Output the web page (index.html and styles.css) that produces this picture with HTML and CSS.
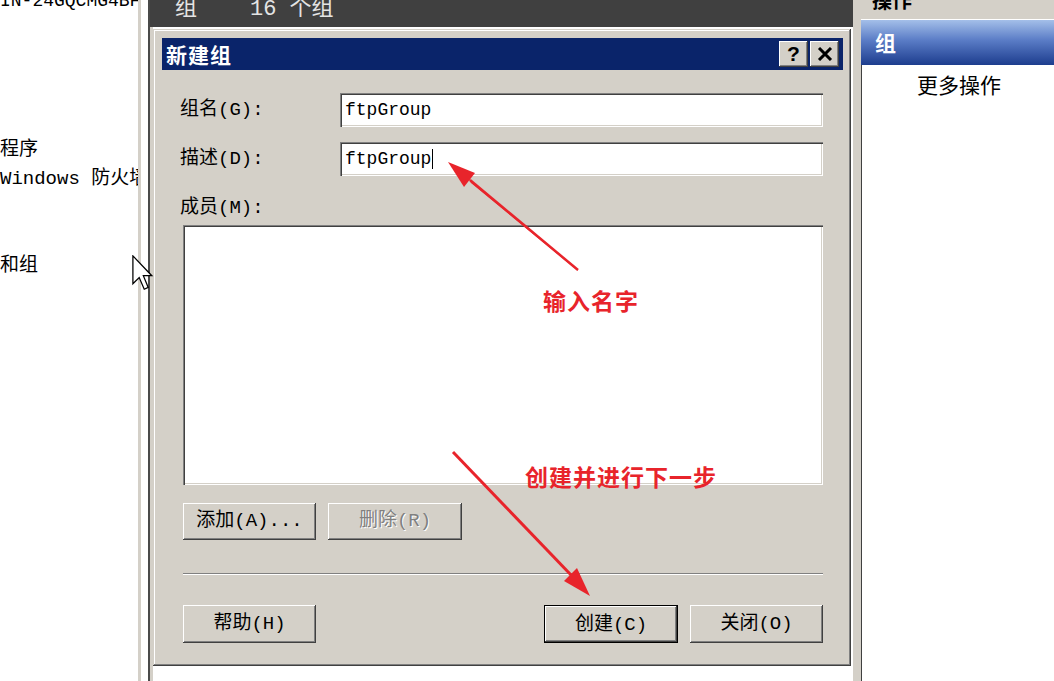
FILE: index.html
```html
<!DOCTYPE html>
<html lang="zh-CN">
<head>
  <meta charset="UTF-8" />
  <title>新建组</title>
  <link rel="stylesheet" href="styles.css">
</head>
<body>

<div class="screen">
  <div class="tree">
    <div class="tree-item top">IN-24GQCMG4BF</div>
    <div class="tree-item t1">程序</div>
    <div class="tree-item">Windows 防火墙</div>
    <div class="tree-item t3">和组</div>
  </div>
  <div class="split"></div>
  <div class="center">
    <div class="list-head"><span>组</span><span class="count">16 个组</span></div>
    <div class="list-body"></div>
  </div>
  <div class="actions">
    <div class="act-head">操作</div>
    <div class="act-band">组</div>
    <div class="act-item">更多操作</div>
  </div>
</div>

<div class="dialog">
  <div class="title">
    <span class="title-text">新建组</span>
    <div class="title-btns">
      <div class="tbtn q">?</div>
      <div class="tbtn">
        <svg width="16" height="14" viewBox="0 0 16 14"><path d="M2 1 L14 13 M14 1 L2 13" stroke="#000" stroke-width="3"/></svg>
      </div>
    </div>
  </div>

  <div class="body">
    <div class="fields">
      <label>组名(G):</label>
      <div class="field"><span>ftpGroup</span></div>
      <label>描述(D):</label>
      <div class="field"><span class="caret">ftpGroup</span></div>
    </div>

    <div class="members-label">成员(M):</div>
    <div class="members"></div>

    <div class="btn-row first">
      <div class="btn">添加(A)...</div>
      <div class="btn disabled">删除(R)</div>
    </div>

    <div class="sep"></div>

    <div class="btn-row last">
      <div class="btn">帮助(H)</div>
      <div class="spacer"></div>
      <div class="btn default">创建(C)</div>
      <div class="btn">关闭(O)</div>
    </div>
  </div>
</div>

<svg class="cursor" width="24" height="38" viewBox="0 0 24 38">
  <path d="M0.5 0.5 L0.5 16 L4 12.5 L6.8 19 L9 18 L6.3 11.5 L11 11.5 Z" transform="scale(1.8)" fill="#fff" stroke="#000" stroke-width="0.7" stroke-linejoin="miter"/>
</svg>

<svg class="marks" width="1054" height="681" viewBox="0 0 1054 681">
  <polygon points="578,271 577,269 468,178 471,183" fill="#e8242b"/>
  <line x1="578" y1="270" x2="470" y2="180" stroke="#e8242b" stroke-width="2.5"/>
  <polygon points="448,162 475,173 464,187" fill="#e8242b"/>
  <line x1="453" y1="452" x2="572" y2="576" stroke="#e8242b" stroke-width="3"/>
  <polygon points="590,596 564,581 577,568" fill="#e8242b"/>
</svg>

<div class="note n1">输入名字</div>
<div class="note n2">创建并进行下一步</div>

</body>
</html>
```

FILE: styles.css
```css
body { margin: 0; width: 1054px; height: 681px; overflow: hidden; background: #fff; font-family: "Liberation Mono", "Noto Sans CJK SC", monospace; font-size: 19px; color: #000; }

.screen { display: flex; height: 681px; }

/* left tree, cut off */
.tree { width: 138px; overflow: hidden; white-space: nowrap; font-size: 19px; }
.tree-item { line-height: 29px; height: 29px; }
.tree-item.top { margin-top: -13px; font-size: 18px; }
.tree-item.t1 { margin-top: 120px; }
.tree-item.t3 { margin-top: 58px; }

.split { width: 12px; box-sizing: border-box; border-left: 3px solid #d4d0c8; border-right: 2px solid #4a4a4a; background: #fff; }

/* list pane behind dialog */
.center { width: 703px; display: flex; flex-direction: column; }
.list-head { height: 27px; background: #404040; color: #e4e4e4; font-size: 22px; line-height: 20px; padding-left: 25px; box-sizing: border-box; white-space: nowrap; }
.list-head .count { margin-left: 53px; }
.list-body { flex: 1; background: #fff; border-left: 3px solid #d4d0c8; }

/* actions pane */
.actions { flex: 1; border-left: 8px solid #d4d0c8; box-shadow: inset 1px 0 #404040; background: #fff; }
.act-head { height: 19px; background: #d4d0c8; font-weight: bold; font-size: 20px; line-height: 6px; padding-left: 11px; border-bottom: 1px solid #fff; overflow: hidden; }
.act-band { height: 45px; background: linear-gradient(#a4bfe9, #5a7cc6 45%, #1d3d8e); color: #fff; font-weight: bold; font-size: 21px; line-height: 45px; padding-left: 14px; font-family: "Noto Sans CJK SC", sans-serif; }
.act-item { margin-top: 8px; line-height: 30px; padding-left: 56px; font-size: 21px; }

/* dialog window */
.dialog { position: absolute; left: 153px; top: 29px; width: 698px; height: 637px; box-sizing: border-box; background: #d4d0c8; padding: 9px 8px 0 9px;
  box-shadow: inset -1px -1px #404040, inset 1px 1px #d4d0c8, inset -2px -2px #808080, inset 2px 2px #fff; }
.title { height: 32px; background: #0a246a; color: #fff; display: flex; align-items: center; justify-content: space-between; padding: 0 4px; }
.title-text { font-family: "Noto Sans CJK SC", sans-serif; font-weight: bold; font-size: 21px; letter-spacing: 1px; }
.title-btns { display: flex; gap: 2px; }
.tbtn { width: 29px; height: 26px; background: #d4d0c8; display: flex; align-items: center; justify-content: center;
  box-shadow: inset -1px -1px #404040, inset 1px 1px #fff, inset -2px -2px #808080; }
.tbtn.q { font-family: "Liberation Sans", sans-serif; font-weight: bold; font-size: 21px; color: #000; }

.body { padding: 23px 20px 0 21px; }
.fields { display: grid; grid-template-columns: 157px 1fr; row-gap: 15px; }
.fields label { line-height: 34px; margin-left: -3px; font-size: 19px; }
.field { height: 34px; background: #fff; box-sizing: border-box; padding-left: 5px; line-height: 34px; font-size: 18px;
  box-shadow: inset 1px 1px #808080, inset 2px 2px #404040, inset -1px -1px #fff, inset -2px -2px #d4d0c8; }
.caret { border-right: 1px solid #000; padding-right: 1px; }

.members-label { margin-top: 20px; line-height: 24px; margin-left: -3px; }
.members { margin-top: 5px; height: 260px; background: #fff;
  box-shadow: inset 1px 1px #808080, inset 2px 2px #404040, inset -1px -1px #fff, inset -2px -2px #d4d0c8; }

.btn-row { display: flex; gap: 12px; }
.btn-row.first { margin-top: 18px; }
.btn-row.last { margin-top: 30px; }
.spacer { flex: 1; }
.btn { width: 133px; height: 37px; box-sizing: border-box; text-align: center; line-height: 37px; background: #d4d0c8; white-space: nowrap;
  box-shadow: inset -1px -1px #404040, inset 1px 1px #fff, inset -2px -2px #808080, inset 2px 2px #d4d0c8; }
.btn-row.last .btn { height: 38px; line-height: 38px; }
.btn.disabled { width: 134px; color: #808080; text-shadow: 1px 1px #fff; }
.btn.default { width: 134px; border: 1px solid #000; line-height: 36px; }

.sep { margin-top: 33px; border-top: 1px solid #808080; border-bottom: 1px solid #fff; }

/* overlays */
.cursor { position: absolute; left: 132px; top: 255px; }
.marks { position: absolute; left: 0; top: 0; pointer-events: none; }
.note { position: absolute; color: #e8242b; font-family: "Noto Sans CJK SC", sans-serif; font-weight: bold; font-size: 23px; line-height: 23px; letter-spacing: 1px; white-space: nowrap; }
.n1 { left: 543px; top: 289px; }
.n2 { left: 525px; top: 465px; }
```
